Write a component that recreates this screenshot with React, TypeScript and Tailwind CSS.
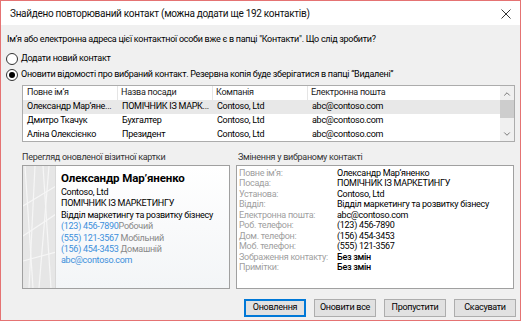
import { ChevronUp, ChevronDown } from "lucide-react";

const rows = [
  { name: "Олександр Мар’яне...", title: "ПОМІЧНИК ІЗ МАРК...", company: "Contoso, Ltd", email: "abc@contoso.com", selected: true },
  { name: "Дмитро Ткачук", title: "Бухгалтер", company: "Contoso, Ltd", email: "abc@contoso.com" },
  { name: "Аліна Олексієнко", title: "Президент", company: "Contoso, Ltd", email: "abc@contoso.com" },
];

const changes: [string, string, boolean?][] = [
  ["Повне ім’я:", "Олександр Мар’яненко"],
  ["Посада:", "ПОМІЧНИК ІЗ МАРКЕТИНГУ"],
  ["Установа:", "Contoso, Ltd"],
  ["Відділ:", "Відділ маркетингу та розвитку бізнесу"],
  ["Електронна пошта:", "abc@contoso.com"],
  ["Роб. телефон:", "(123) 456-7890"],
  ["Дом. телефон:", "(156) 454-3453"],
  ["Моб. телефон:", "(555) 121-3567"],
  ["Зображення контакту:", "Без змін", true],
  ["Примітки:", "Без змін", true],
];

function Radio({ checked, label }: { checked?: boolean; label: string }) {
  return (
    <div className="flex items-center h-[14px] whitespace-nowrap">
      <span className="w-[12px] h-[12px] shrink-0 rounded-full border border-[#333] bg-white flex items-center justify-center ml-[5px]">
        {checked && <span className="w-[6px] h-[6px] rounded-full bg-black" />}
      </span>
      <span className="ml-[3px]">{label}</span>
    </div>
  );
}

function CardStrip() {
  return (
    <div className="w-[33px] h-full bg-[#e6e6e6] border-r border-[#d8d8d8] overflow-hidden shrink-0">
      <svg width="33" height="122" viewBox="0 0 33 122">
        <g stroke="#f6f6f6" strokeWidth="1.2" fill="none">
          <path d="M2 0 L10 122" />
          <path d="M12 0 L6 122" />
          <path d="M20 0 L28 122" />
          <path d="M0 40 L33 20" />
          <path d="M0 70 L33 48" />
          <path d="M0 95 L33 86" />
          <path d="M26 0 L16 122" />
        </g>
      </svg>
    </div>
  );
}

export default function App() {
  return (
    <div className="w-[522px] h-[323px] bg-white font-['Roboto',sans-serif] text-[9px] tracking-[-0.28px] text-black">
      <div className="w-[521px] h-[321px] border border-[#e57373] bg-[#f0f0f0] flex flex-col">
        {/* title bar */}
        <div className="h-[24px] bg-white flex items-center justify-between pl-[9px] pr-[9px] shrink-0">
          <span className="text-[10px] tracking-[-0.3px] text-[#111] whitespace-nowrap">Знайдено повторюваний контакт (можна додати ще 192 контактів)</span>
          <svg width="10" height="10" viewBox="0 0 10 10" className="mt-[2px]">
            <path d="M0.5 0.5 L9.5 9.5 M9.5 0.5 L0.5 9.5" stroke="#333" strokeWidth="1" />
          </svg>
        </div>

        <div className="flex flex-col pl-[6px] pr-[4px]">
          <div className="h-[14px] mt-[7px] leading-[14px] whitespace-nowrap">
            Ім’я або електронна адреса цієї контактної особи вже є в папці "Контакти". Що слід зробити?
          </div>
          <div className="mt-[6px] -ml-[6px]">
            <Radio label="Додати новий контакт" />
          </div>
          <div className="mt-[2px] -ml-[6px]">
            <Radio checked label="Оновити відомості про вибраний контакт. Резервна копія буде зберігатися в папці “Видалені”" />
          </div>

          {/* contacts list */}
          <div className="ml-[15px] mt-[3px] w-[493px] h-[57px] border border-[#acacac] bg-white flex">
            <div className="w-[477px]">
              <div className="grid grid-cols-[95px_95px_95px_192px] h-[14px] text-[#222]">
                <div className="pl-[4px] border-r border-[#e5e5e5] flex items-center">Повне ім’я</div>
                <div className="pl-[3px] border-r border-[#e5e5e5] flex items-center">Назва посади</div>
                <div className="pl-[3px] border-r border-[#e5e5e5] flex items-center">Компанія</div>
                <div className="pl-[3px] flex items-center">Електронна пошта</div>
              </div>
              {rows.map((r) => (
                <div key={r.name} className={`grid grid-cols-[95px_95px_95px_192px] h-[14px] items-center ${r.selected ? "bg-[#e8e8e8]" : ""}`}>
                  <div className="pl-[4px] whitespace-nowrap overflow-hidden">{r.name}</div>
                  <div className="pl-[4px] whitespace-nowrap overflow-hidden">{r.title}</div>
                  <div className="pl-[4px] whitespace-nowrap overflow-hidden">{r.company}</div>
                  <div className="pl-[4px] whitespace-nowrap overflow-hidden">{r.email}</div>
                </div>
              ))}
            </div>
            <div className="w-[14px] bg-[#f0f0f0] flex flex-col items-center">
              <ChevronUp size={10} strokeWidth={2} className="mt-[3px] text-[#606060]" />
              <div className="w-[14px] h-[18px] bg-[#cdcdcd] mt-[1px]" />
              <ChevronDown size={10} strokeWidth={2} className="mt-auto mb-[2px] text-[#606060]" />
            </div>
          </div>

          {/* lower panes */}
          <div className="flex ml-[15px] mt-[8px] gap-[6px]">
            <div className="w-[208px] flex flex-col">
              <div className="h-[14px] leading-[14px] text-[#333] whitespace-nowrap">Перегляд оновленої візитної картки</div>
              <div className="mt-[1px] h-[124px] border border-[#a0a0a0] bg-white flex">
                <CardStrip />
                <div className="flex-1 pl-[5px] pt-[5px] bg-gradient-to-b from-white to-[#f3f5f7] leading-[11.4px] whitespace-nowrap">
                  <div className="text-[11.5px] tracking-[-0.1px] font-bold leading-[15px] mb-[1px]">Олександр Мар’яненко</div>
                  <div>Contoso, Ltd</div>
                  <div>ПОМІЧНИК ІЗ МАРКЕТИНГУ</div>
                  <div>Відділ маркетингу та розвитку бізнесу</div>
                  <div><span className="text-[#3c8fdb]">(123) 456-7890</span><span className="text-[#888]">Робочий</span></div>
                  <div><span className="text-[#3c8fdb]">(555) 121-3567</span> <span className="text-[#888]">Мобільний</span></div>
                  <div><span className="text-[#3c8fdb]">(156) 454-3453</span> <span className="text-[#888]">Домашній</span></div>
                  <div className="text-[#3c8fdb]">abc@contoso.com</div>
                </div>
              </div>
            </div>
            <div className="w-[278px] flex flex-col">
              <div className="h-[14px] leading-[14px] pl-[2px] text-[#333] whitespace-nowrap">Змінення у вибраному контакті</div>
              <div className="mt-[1px] h-[124px] border border-[#a0a0a0] bg-white pl-[2px] pt-[2px] leading-[10.45px]">
                {changes.map(([k, v, bold]) => (
                  <div key={k} className="flex whitespace-nowrap">
                    <div className="w-[98px] shrink-0 text-[#a0a0a0]">{k}</div>
                    <div className={bold ? "font-medium" : ""}>{v}</div>
                  </div>
                ))}
              </div>
            </div>
          </div>

          {/* buttons */}
          <div className="flex justify-end gap-[8px] mt-[10px]">
            {["Оновлення", "Оновити все", "Пропустити", "Скасувати"].map((b, i) => (
              <div
                key={b}
                className={`w-[62px] h-[18px] flex items-center justify-center whitespace-nowrap bg-[#e1e1e1] ${i === 0 ? "border-2 border-[#0078d7]" : "border border-[#adadad]"}`}
              >
                {b}
              </div>
            ))}
          </div>
        </div>
      </div>
    </div>
  );
}
